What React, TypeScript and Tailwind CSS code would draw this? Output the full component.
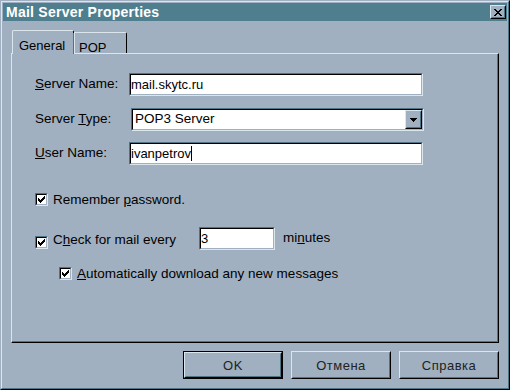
import React from "react";

function Raised({ className = "", children }: { className?: string; children?: React.ReactNode }) {
  return (
    <div className={"border border-[#dbe5ec] border-b-black border-r-black shrink-0 " + className}>
      <div className="w-full h-full border border-transparent border-b-[#4f7585] border-r-[#4f7585] flex items-center justify-center">
        {children}
      </div>
    </div>
  );
}

function Sunken({ className = "", children }: { className?: string; children?: React.ReactNode }) {
  return (
    <div className={"border border-[#4f7585] border-b-[#dbe5ec] border-r-[#dbe5ec] shrink-0 " + className}>
      <div className="w-full h-full border border-black border-b-[#a0b0c0] border-r-[#a0b0c0] bg-white flex">
        {children}
      </div>
    </div>
  );
}

function CheckMark() {
  const cols: [number, number][] = [
    [0, 2],
    [1, 3],
    [2, 4],
    [3, 3],
    [4, 2],
    [5, 1],
    [6, 0],
  ];
  return (
    <svg width="7" height="7" viewBox="0 0 7 7" shapeRendering="crispEdges" className="shrink-0">
      {cols.map(([x, y]) => (
        <rect key={x} x={x} y={y} width="1" height="3" fill="#000" />
      ))}
    </svg>
  );
}

function Checkbox() {
  return (
    <Sunken className="w-[13px] h-[13px]">
      <div className="w-full h-full flex items-center justify-center">
        <CheckMark />
      </div>
    </Sunken>
  );
}

function CloseGlyph() {
  const rows = [
    "XX....XX",
    ".XX..XX.",
    "..XXXX..",
    "...XX...",
    "..XXXX..",
    ".XX..XX.",
    "XX....XX",
  ];
  return (
    <svg width="8" height="7" viewBox="0 0 8 7" shapeRendering="crispEdges">
      {rows.flatMap((r, y) =>
        r.split("").map((c, x) => (c === "X" ? <rect key={x + "-" + y} x={x} y={y} width="1" height="1" fill="#000" /> : null))
      )}
    </svg>
  );
}

function DownArrow() {
  return (
    <svg width="7" height="4" viewBox="0 0 7 4" shapeRendering="crispEdges">
      <rect x="0" y="0" width="7" height="1" fill="#000" />
      <rect x="1" y="1" width="5" height="1" fill="#000" />
      <rect x="2" y="2" width="3" height="1" fill="#000" />
      <rect x="3" y="3" width="1" height="1" fill="#000" />
    </svg>
  );
}

function Btn({ label, isDefault = false }: { label: string; isDefault?: boolean }) {
  const text = <span className="text-[13px] tracking-[0.5px] leading-none text-[#222]">{label}</span>;
  if (isDefault) {
    return (
      <div className="w-[100px] h-[28px] border border-black">
        <Raised className="w-full h-full">{text}</Raised>
      </div>
    );
  }
  return <Raised className="w-[100px] h-[28px]">{text}</Raised>;
}

export default function App() {
  return (
    <div className="w-[510px] h-[390px] bg-[#a0b0c0] font-['Liberation_Sans',Arial,sans-serif] text-black select-none">
      <div className="h-full border border-[#a0b0c0] border-b-black border-r-black">
        <div className="h-full border border-[#dbe5ec] border-b-[#4f7585] border-r-[#4f7585] p-px flex flex-col">
          {/* Title bar */}
          <div className="h-[18px] bg-[#4f7f8f] flex items-center justify-between pl-[3px] pr-px shrink-0">
            <span className="text-white font-bold text-[14px] tracking-[0.25px] leading-none">Mail Server Properties</span>
            <Raised className="w-[16px] h-[14px] bg-[#a0b0c0]">
              <CloseGlyph />
            </Raised>
          </div>

          {/* Tabs */}
          <div className="mt-[9px] ml-[9px] h-[24px] -mb-px flex items-end relative z-10 shrink-0">
            <div className="w-[62px] h-[24px] bg-[#a0b0c0] border-t border-l border-r border-t-[#dbe5ec] border-l-[#dbe5ec] border-r-black rounded-tl-[2px] rounded-tr-[2px] pl-[6px] pt-[2px]">
              <div className="h-full border-r border-r-[#4f7585] -mr-px">
                <span className="text-[13px] leading-[15px]">General</span>
              </div>
            </div>
            <div className="w-[53px] h-[21px] mb-px bg-[#a0b0c0] border-t border-l border-r border-t-[#dbe5ec] border-l-[#dbe5ec] border-r-black rounded-tr-[2px] pl-[4px] pt-[2px]">
              <span className="text-[13px] leading-[15px]">POP</span>
            </div>
          </div>

          {/* Panel */}
          <div className="ml-[8px] w-[488px] h-[290px] border border-[#dbe5ec] border-b-black border-r-black shrink-0">
            <div className="w-full h-full border-b border-r border-b-[#4f7585] border-r-[#4f7585] pl-[23px] pt-[19px] flex flex-col text-[13.5px]">
              {/* Server Name */}
              <div className="flex items-center h-[23px]">
                <div className="w-[94px]">
                  <u className="underline-offset-[1px]">S</u>erver Name:
                </div>
                <Sunken className="w-[294px] h-[23px]">
                  <div className="flex items-center text-[13px]">mail.skytc.ru</div>
                </Sunken>
              </div>

              {/* Server Type */}
              <div className="flex items-center h-[23px] mt-[12px]">
                <div className="w-[96px]">
                  Server <u className="underline-offset-[1px]">T</u>ype:
                </div>
                <Sunken className="w-[293px] h-[23px]">
                  <div className="flex-1 flex items-center pl-[2px] text-[13.5px]">POP3 Server</div>
                  <Raised className="w-[17px] h-full bg-[#a0b0c0]">
                    <DownArrow />
                  </Raised>
                </Sunken>
              </div>

              {/* User Name */}
              <div className="flex items-center h-[23px] mt-[11px]">
                <div className="w-[94px]">
                  <u className="underline-offset-[1px]">U</u>ser Name:
                </div>
                <Sunken className="w-[294px] h-[23px]">
                  <div className="flex items-center text-[13px]">
                    ivanpetrov
                    <span className="inline-block w-px h-[15px] bg-black" />
                  </div>
                </Sunken>
              </div>

              {/* Remember password */}
              <div className="flex items-center h-[13px] mt-[28px]">
                <Checkbox />
                <span className="ml-[5px] leading-none">
                  Remember <u className="underline-offset-[1px]">p</u>assword.
                </span>
              </div>

              {/* Check for mail */}
              <div className="flex items-start h-[23px] mt-[21px]">
                <div className="w-[164px] h-[13px] mt-[9px] shrink-0 flex items-center">
                  <Checkbox />
                  <span className="ml-[5px] mb-[6px] leading-none whitespace-nowrap">
                    C<u className="underline-offset-[1px]">h</u>eck for mail every
                  </span>
                </div>
                <Sunken className="w-[76px] h-[23px]">
                  <div className="flex items-center text-[13px]">3</div>
                </Sunken>
                <span className="ml-[8px] mt-[4px] leading-none">
                  mi<u className="underline-offset-[1px]">n</u>utes
                </span>
              </div>

              {/* Auto download */}
              <div className="flex items-center h-[13px] mt-[17px] ml-[24px]">
                <Checkbox />
                <span className="ml-[5px] leading-none">
                  <u className="underline-offset-[1px]">A</u>utomatically download any new messages
                </span>
              </div>
            </div>
          </div>

          {/* Buttons */}
          <div className="ml-[8px] w-[488px] mt-[8px] flex justify-end gap-[8px] shrink-0">
            <Btn label="OK" isDefault />
            <Btn label="Отмена" />
            <Btn label="Справка" />
          </div>
        </div>
      </div>
    </div>
  );
}
